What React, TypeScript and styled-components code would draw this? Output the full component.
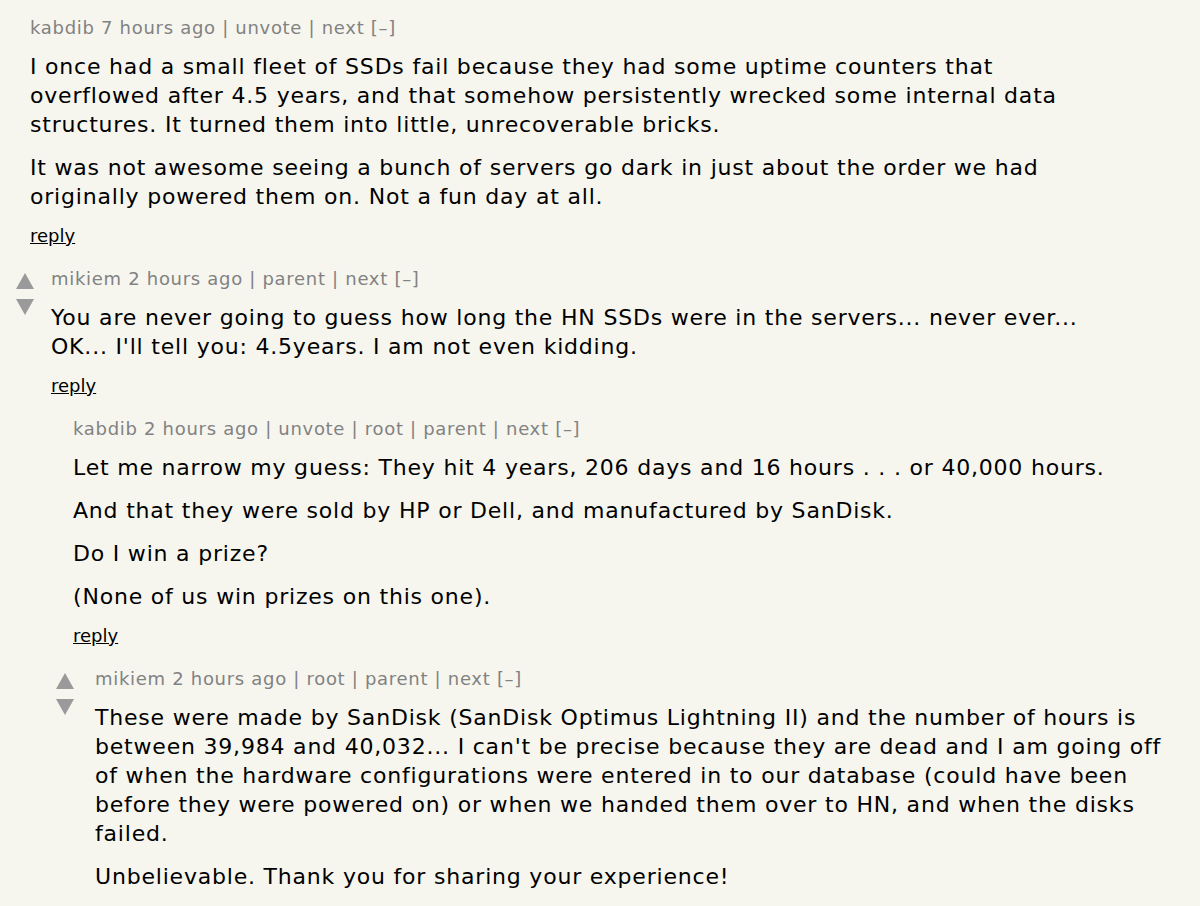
import React from "react";
import styled, { createGlobalStyle } from "styled-components";

const GlobalStyle = createGlobalStyle`
  html, body {
    margin: 0;
    padding: 0;
    background: #f6f6ef;
  }
  body {
    font-family: "DejaVu Sans", Verdana, sans-serif;
    color: #000;
  }
`;

type CommentData = {
  user: string;
  age: string;
  links: string[];
  paragraphs: string[];
  indent: number;
  voteWidth: number;
  votes: boolean;
  textWidth: number;
  reply: boolean;
};

const comments: CommentData[] = [
  {
    user: "kabdib",
    age: "7 hours ago",
    links: ["unvote", "next"],
    paragraphs: [
      "I once had a small fleet of SSDs fail because they had some uptime counters that overflowed after 4.5 years, and that somehow persistently wrecked some internal data structures. It turned them into little, unrecoverable bricks.",
      "It was not awesome seeing a bunch of servers go dark in just about the order we had originally powered them on. Not a fun day at all.",
    ],
    indent: 30,
    voteWidth: 0,
    votes: false,
    textWidth: 1090,
    reply: true,
  },
  {
    user: "mikiem",
    age: "2 hours ago",
    links: ["parent", "next"],
    paragraphs: [
      "You are never going to guess how long the HN SSDs were in the servers... never ever... OK... I'll tell you: 4.5years. I am not even kidding.",
    ],
    indent: 16,
    voteWidth: 35,
    votes: true,
    textWidth: 1075,
    reply: true,
  },
  {
    user: "kabdib",
    age: "2 hours ago",
    links: ["unvote", "root", "parent", "next"],
    paragraphs: [
      "Let me narrow my guess: They hit 4 years, 206 days and 16 hours . . . or 40,000 hours.",
      "And that they were sold by HP or Dell, and manufactured by SanDisk.",
      "Do I win a prize?",
      "(None of us win prizes on this one).",
    ],
    indent: 73,
    voteWidth: 0,
    votes: false,
    textWidth: 1080,
    reply: true,
  },
  {
    user: "mikiem",
    age: "2 hours ago",
    links: ["root", "parent", "next"],
    paragraphs: [
      "These were made by SanDisk (SanDisk Optimus Lightning II) and the number of hours is between 39,984 and 40,032... I can't be precise because they are dead and I am going off of when the hardware configurations were entered in to our database (could have been before they were powered on) or when we handed them over to HN, and when the disks failed.",
      "Unbelievable. Thank you for sharing your experience!",
    ],
    indent: 56,
    voteWidth: 39,
    votes: true,
    textWidth: 1080,
    reply: false,
  },
];

const Page = styled.div`
  padding-top: 16px;
  display: flex;
  flex-direction: column;
  gap: 19px;
`;

const Row = styled.div<{ $indent: number }>`
  display: flex;
  padding-left: ${(p) => p.$indent}px;
`;

const VoteCol = styled.div<{ $w: number }>`
  width: ${(p) => p.$w}px;
  flex: none;
  padding-top: 6px;
`;

const Body = styled.div<{ $w: number }>`
  width: ${(p) => p.$w}px;
`;

const Meta = styled.div`
  font-size: 18px;
  letter-spacing: 0.7px;
  line-height: 24px;
  color: #828282;
  height: 24px;
  white-space: nowrap;
`;

const Text = styled.div`
  margin-top: 12px;
  font-size: 22px;
  letter-spacing: 0.8px;
  line-height: 29px;
  display: flex;
  flex-direction: column;
  gap: 14px;
`;

const Para = styled.p`
  margin: 0;
`;

const Reply = styled.a`
  display: block;
  margin-top: 13px;
  font-size: 18px;
  line-height: 24px;
  color: #000;
  text-decoration: underline;
`;

const Arrows = () => (
  <svg width="18" height="42" viewBox="0 0 18 42">
    <polygon points="9,0 18,16 0,16" fill="#9a9a9a" />
    <polygon points="0,26 18,26 9,42" fill="#9a9a9a" />
  </svg>
);

const Comment = ({ c }: { c: CommentData }) => (
  <Row $indent={c.indent}>
    <VoteCol $w={c.voteWidth}>{c.votes && <Arrows />}</VoteCol>
    <Body $w={c.textWidth}>
      <Meta>
        {c.user} {c.age} | {c.links.join(" | ")} [–]
      </Meta>
      <Text>
        {c.paragraphs.map((p, i) => (
          <Para key={i}>{p}</Para>
        ))}
      </Text>
      {c.reply && <Reply>reply</Reply>}
    </Body>
  </Row>
);

export default function App() {
  return (
    <>
      <GlobalStyle />
      <Page>
        {comments.map((c, i) => (
          <Comment key={i} c={c} />
        ))}
      </Page>
    </>
  );
}
